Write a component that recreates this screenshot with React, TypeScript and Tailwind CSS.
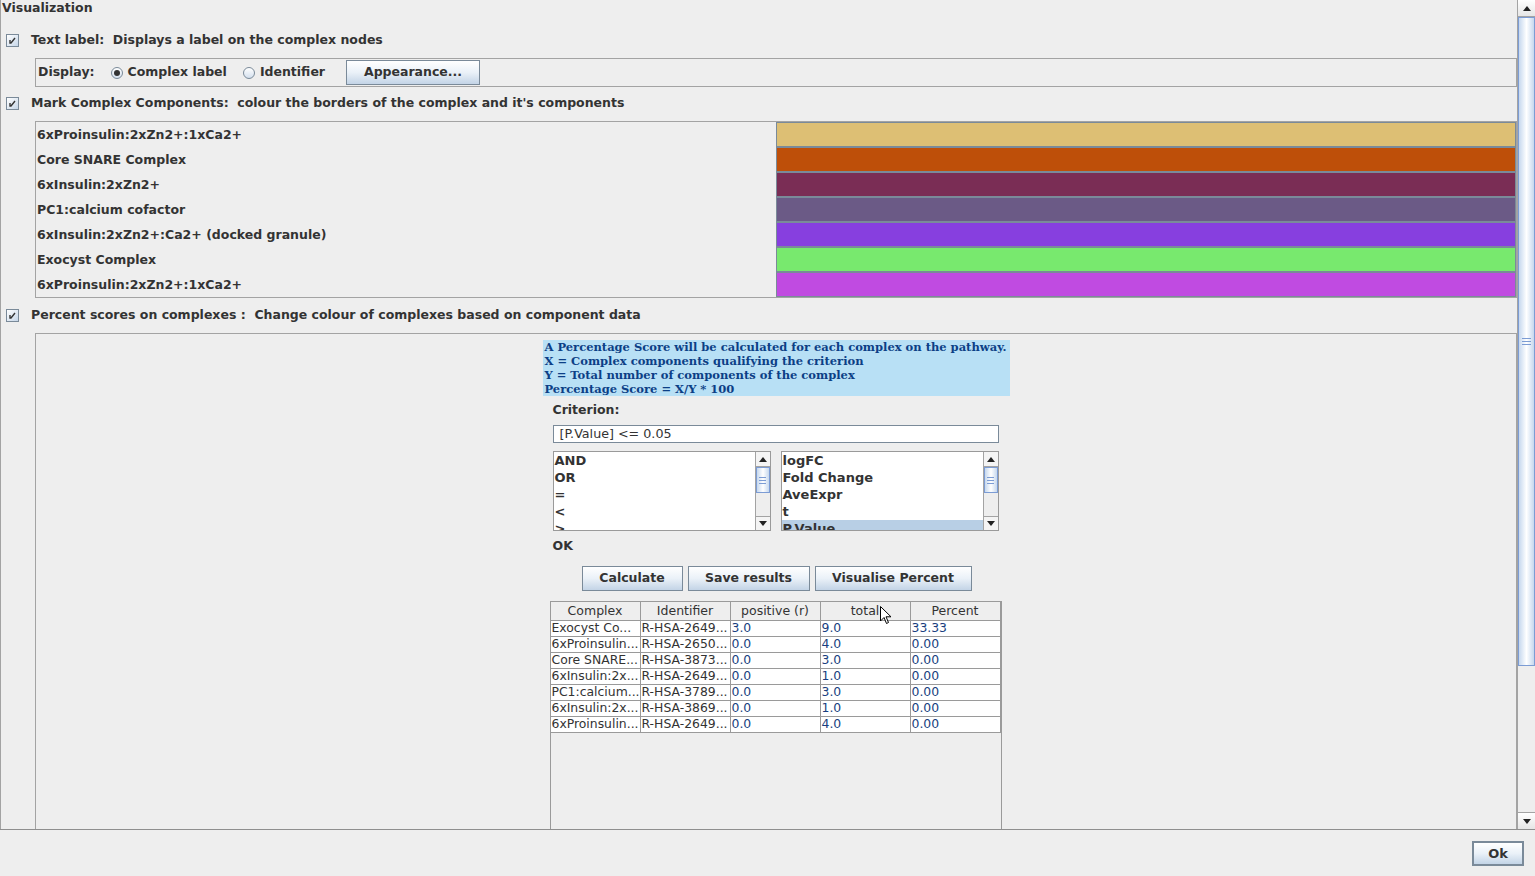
const complexes = [
  { name: '6xProinsulin:2xZn2+:1xCa2+', color: '#ddbf74' },
  { name: 'Core SNARE Complex', color: '#be4f09' },
  { name: '6xInsulin:2xZn2+', color: '#7a2d55' },
  { name: 'PC1:calcium cofactor', color: '#6b5a86' },
  { name: '6xInsulin:2xZn2+:Ca2+ (docked granule)', color: '#873fdf' },
  { name: 'Exocyst Complex', color: '#78e96e' },
  { name: '6xProinsulin:2xZn2+:1xCa2+', color: '#c04be1' },
];

const results = [
  ['Exocyst Co...', 'R-HSA-2649...', '3.0', '9.0', '33.33'],
  ['6xProinsulin...', 'R-HSA-2650...', '0.0', '4.0', '0.00'],
  ['Core SNARE...', 'R-HSA-3873...', '0.0', '3.0', '0.00'],
  ['6xInsulin:2x...', 'R-HSA-2649...', '0.0', '1.0', '0.00'],
  ['PC1:calcium...', 'R-HSA-3789...', '0.0', '3.0', '0.00'],
  ['6xInsulin:2x...', 'R-HSA-3869...', '0.0', '1.0', '0.00'],
  ['6xProinsulin...', 'R-HSA-2649...', '0.0', '4.0', '0.00'],
];

const operators = ['AND', 'OR', '=', '<', '>'];
const columns = ['logFC', 'Fold Change', 'AveExpr', 't', 'P.Value'];

function CheckBox() {
  return (
    <div className="w-[13px] h-[13px] border border-[#7a8a99] bg-gradient-to-br from-[#ffffff] to-[#c6d6e8] flex items-center justify-center">
      <svg width="9" height="9" viewBox="0 0 9 9">
        <path d="M2 4 L2 7 L3 7 L7 2" stroke="#333" strokeWidth="1.4" fill="none" />
      </svg>
    </div>
  );
}

function Radio({ on }: { on?: boolean }) {
  return (
    <div className="w-[12px] h-[12px] rounded-full border border-[#7a8a99] bg-gradient-to-b from-[#ffffff] to-[#d4e0ee] flex items-center justify-center">
      {on && <div className="w-[6px] h-[6px] rounded-full bg-[#333]" />}
    </div>
  );
}

function Button({ label, w, className = '' }: { label: string; w: string; className?: string }) {
  return (
    <div
      className={`${w} h-[25px] border border-[#7a8a99] bg-gradient-to-b from-[#ffffff] via-[#eaf1f8] to-[#c3d4e6] flex items-center justify-center font-bold text-[12.5px] text-[#333] ${className}`}
    >
      {label}
    </div>
  );
}

function Arrow({ up }: { up?: boolean }) {
  return (
    <svg width="8" height="5" viewBox="0 0 8 5">
      {up ? <path d="M0 5 L4 0 L8 5 Z" fill="#222" /> : <path d="M0 0 L8 0 L4 5 Z" fill="#222" />}
    </svg>
  );
}

function MiniScroll() {
  return (
    <div className="w-[15px] h-full border-l border-[#a3a3a3] flex flex-col bg-[#eeeeee]">
      <div className="h-[15px] border-b border-[#a3a3a3] bg-[#f4f4f4] flex items-center justify-center">
        <Arrow up />
      </div>
      <div className="h-[26px] border border-[#7c9cd4] bg-gradient-to-r from-[#c6d8ee] via-[#ffffff] to-[#c6d8ee] flex flex-col items-center justify-center gap-[2px]">
        <div className="w-[7px] h-px bg-[#7c9cd4]" />
        <div className="w-[7px] h-px bg-[#7c9cd4]" />
        <div className="w-[7px] h-px bg-[#7c9cd4]" />
      </div>
      <div className="flex-1" />
      <div className="h-[14px] border-t border-[#a3a3a3] bg-[#f4f4f4] flex items-center justify-center">
        <Arrow />
      </div>
    </div>
  );
}

function ListBox({ items, selected }: { items: string[]; selected?: number }) {
  return (
    <div className="w-[218px] h-[80px] border border-[#9a9a9a] bg-white flex">
      <div className="flex-1 overflow-hidden">
        {items.map((it, i) => (
          <div
            key={it}
            className={`h-[17px] leading-[17px] pl-[1px] font-bold text-[13px] text-[#333] ${i === selected ? 'bg-[#b8cfe5]' : ''}`}
          >
            {it}
          </div>
        ))}
      </div>
      <MiniScroll />
    </div>
  );
}

export default function App() {
  return (
    <div className="w-[1535px] h-[876px] bg-[#eeeeee] font-['DejaVu_Sans',sans-serif] text-[12px] text-[#333] flex flex-col overflow-hidden relative">
      <div className="h-[830px] flex border-b border-[#8e8e8e]">
        {/* main panel */}
        <div className="flex-1 border-l border-[#a3a3a3] flex flex-col overflow-hidden">
          <div className="h-[17px] leading-[16px] pl-[1px] font-bold text-[12.5px] text-[#333]">Visualization</div>

          <div className="mt-[15px] h-[16px] flex items-center pl-[5px]">
            <CheckBox />
            <span className="ml-[12px] font-bold text-[12.5px]">Text label:&nbsp; Displays a label on the complex nodes</span>
          </div>

          <div className="mt-[10px] ml-[34px] h-[29px] border border-[#a3a3a3] flex items-center pl-[2px]">
            <span className="font-bold text-[12.5px]">Display:</span>
            <div className="ml-[16px]">
              <Radio on />
            </div>
            <span className="ml-[5px] font-bold text-[12.5px]">Complex label</span>
            <div className="ml-[16px]">
              <Radio />
            </div>
            <span className="ml-[5px] font-bold text-[12.5px]">Identifier</span>
            <Button label="Appearance..." w="w-[134px]" className="ml-[21px]" />
          </div>

          <div className="mt-[8px] h-[16px] flex items-center pl-[5px]">
            <CheckBox />
            <span className="ml-[12px] font-bold text-[12.5px]">
              Mark Complex Components:&nbsp; colour the borders of the complex and it's components
            </span>
          </div>

          <div className="mt-[10px] ml-[34px] h-[177px] border border-[#a3a3a3] flex flex-col">
            {complexes.map((c, i) => (
              <div key={i} className="h-[25px] flex">
                <div className="w-[740px] pl-[1px] leading-[25px] font-bold text-[12.5px]">{c.name}</div>
                <div className="flex-1 border border-[#7a8a99]" style={{ backgroundColor: c.color }} />
              </div>
            ))}
          </div>

          <div className="mt-[9px] h-[16px] flex items-center pl-[5px]">
            <CheckBox />
            <span className="ml-[12px] font-bold text-[12.5px]">
              Percent scores on complexes :&nbsp; Change colour of complexes based on component data
            </span>
          </div>

          <div className="mt-[10px] ml-[34px] flex-1 border-t border-l border-r border-[#a3a3a3] flex justify-center">
            <div className="w-[467px] flex flex-col pt-[6px]">
              <div className="bg-[#b8e0f5] px-[2px] font-['DejaVu_Serif',serif] font-bold text-[11.5px] leading-[14px] text-[#0c3f86] whitespace-nowrap">
                <div>A Percentage Score will be calculated for each complex on the pathway.</div>
                <div>X = Complex components qualifying the criterion</div>
                <div>Y = Total number of components of the complex</div>
                <div>Percentage Score = X/Y * 100</div>
              </div>

              <div className="ml-[10px] mt-[6px] font-bold text-[12.5px] h-[16px] leading-[16px]">Criterion:</div>

              <div className="ml-[10px] mt-[7px] w-[446px] h-[18px] border border-[#7a8a99] bg-white leading-[16px] pl-[6px] text-[12.7px] text-[#333]">
                [P.Value] &lt;= 0.05
              </div>

              <div className="ml-[10px] mt-[8px] flex gap-[10px]">
                <ListBox items={operators} />
                <ListBox items={columns} selected={4} />
              </div>

              <div className="ml-[10px] mt-[7px] font-bold text-[12.5px] h-[16px] leading-[16px]">OK</div>

              <div className="mt-[12px] flex gap-[5px] ml-[39px]">
                <Button label="Calculate" w="w-[101px]" />
                <Button label="Save results" w="w-[122px]" />
                <Button label="Visualise Percent" w="w-[157px]" />
              </div>

              <div className="mt-[10px] ml-[7px] w-[452px] flex-1 border border-[#9a9a9a] border-b-0 flex flex-col">
                <div className="flex h-[19px] border-b border-[#9a9a9a]">
                  {['Complex', 'Identifier', 'positive (r)', 'total', 'Percent'].map((h) => (
                    <div
                      key={h}
                      className="w-[90px] flex items-center justify-center text-[12.5px] text-[#333] bg-[#eeeeee] border-r border-[#9a9a9a]"
                    >
                      {h}
                    </div>
                  ))}
                </div>
                <div className="bg-white">
                  {results.map((r, i) => (
                    <div key={i} className="flex h-[16px] border-b border-[#9a9a9a]">
                      {r.map((v, j) => (
                        <div
                          key={j}
                          className={`w-[90px] pl-[1px] leading-[14px] text-[12.4px] border-r border-[#9a9a9a] whitespace-nowrap overflow-hidden ${
                            j >= 2 ? 'text-[#1a3f80]' : 'text-[#333]'
                          }`}
                        >
                          {v}
                        </div>
                      ))}
                    </div>
                  ))}
                </div>
                <div className="flex-1 bg-[#eeeeee]" />
              </div>
            </div>
          </div>
        </div>

        {/* main scrollbar */}
        <div className="w-[18px] border-l border-[#a3a3a3] flex flex-col bg-[#eeeeee]">
          <div className="h-[17px] border-b border-[#a3a3a3] bg-gradient-to-b from-[#ffffff] to-[#e6e6e6] flex items-center justify-center">
            <Arrow up />
          </div>
          <div className="h-[649px] border border-[#7c9cd4] bg-gradient-to-r from-[#c6d8ee] via-[#ffffff] to-[#c6d8ee] flex flex-col items-center justify-center gap-[2px]">
            <div className="w-[9px] h-px bg-[#7c9cd4]" />
            <div className="w-[9px] h-px bg-[#7c9cd4]" />
            <div className="w-[9px] h-px bg-[#7c9cd4]" />
          </div>
          <div className="flex-1" />
          <div className="h-[17px] border-t border-[#a3a3a3] bg-gradient-to-b from-[#ffffff] to-[#e6e6e6] flex items-center justify-center">
            <Arrow />
          </div>
        </div>
      </div>

      <div className="flex-1 flex justify-end items-start pt-[11px] pr-[11px]">
        <div className="w-[52px] h-[25px] border-2 border-[#7a8a99] bg-gradient-to-b from-[#ffffff] via-[#eaf1f8] to-[#c3d4e6] flex items-center justify-center font-bold text-[13px] text-[#333]">
          Ok
        </div>
      </div>

      {/* mouse pointer */}
      <svg className="absolute left-[880px] top-[606px]" width="12" height="19" viewBox="0 0 12 19">
        <path d="M0.5 0.5 L0.5 15 L4 11.5 L6.5 17.5 L8.5 16.5 L6 10.8 L11 10.8 Z" fill="#fff" stroke="#000" strokeWidth="1" />
      </svg>
    </div>
  );
}
